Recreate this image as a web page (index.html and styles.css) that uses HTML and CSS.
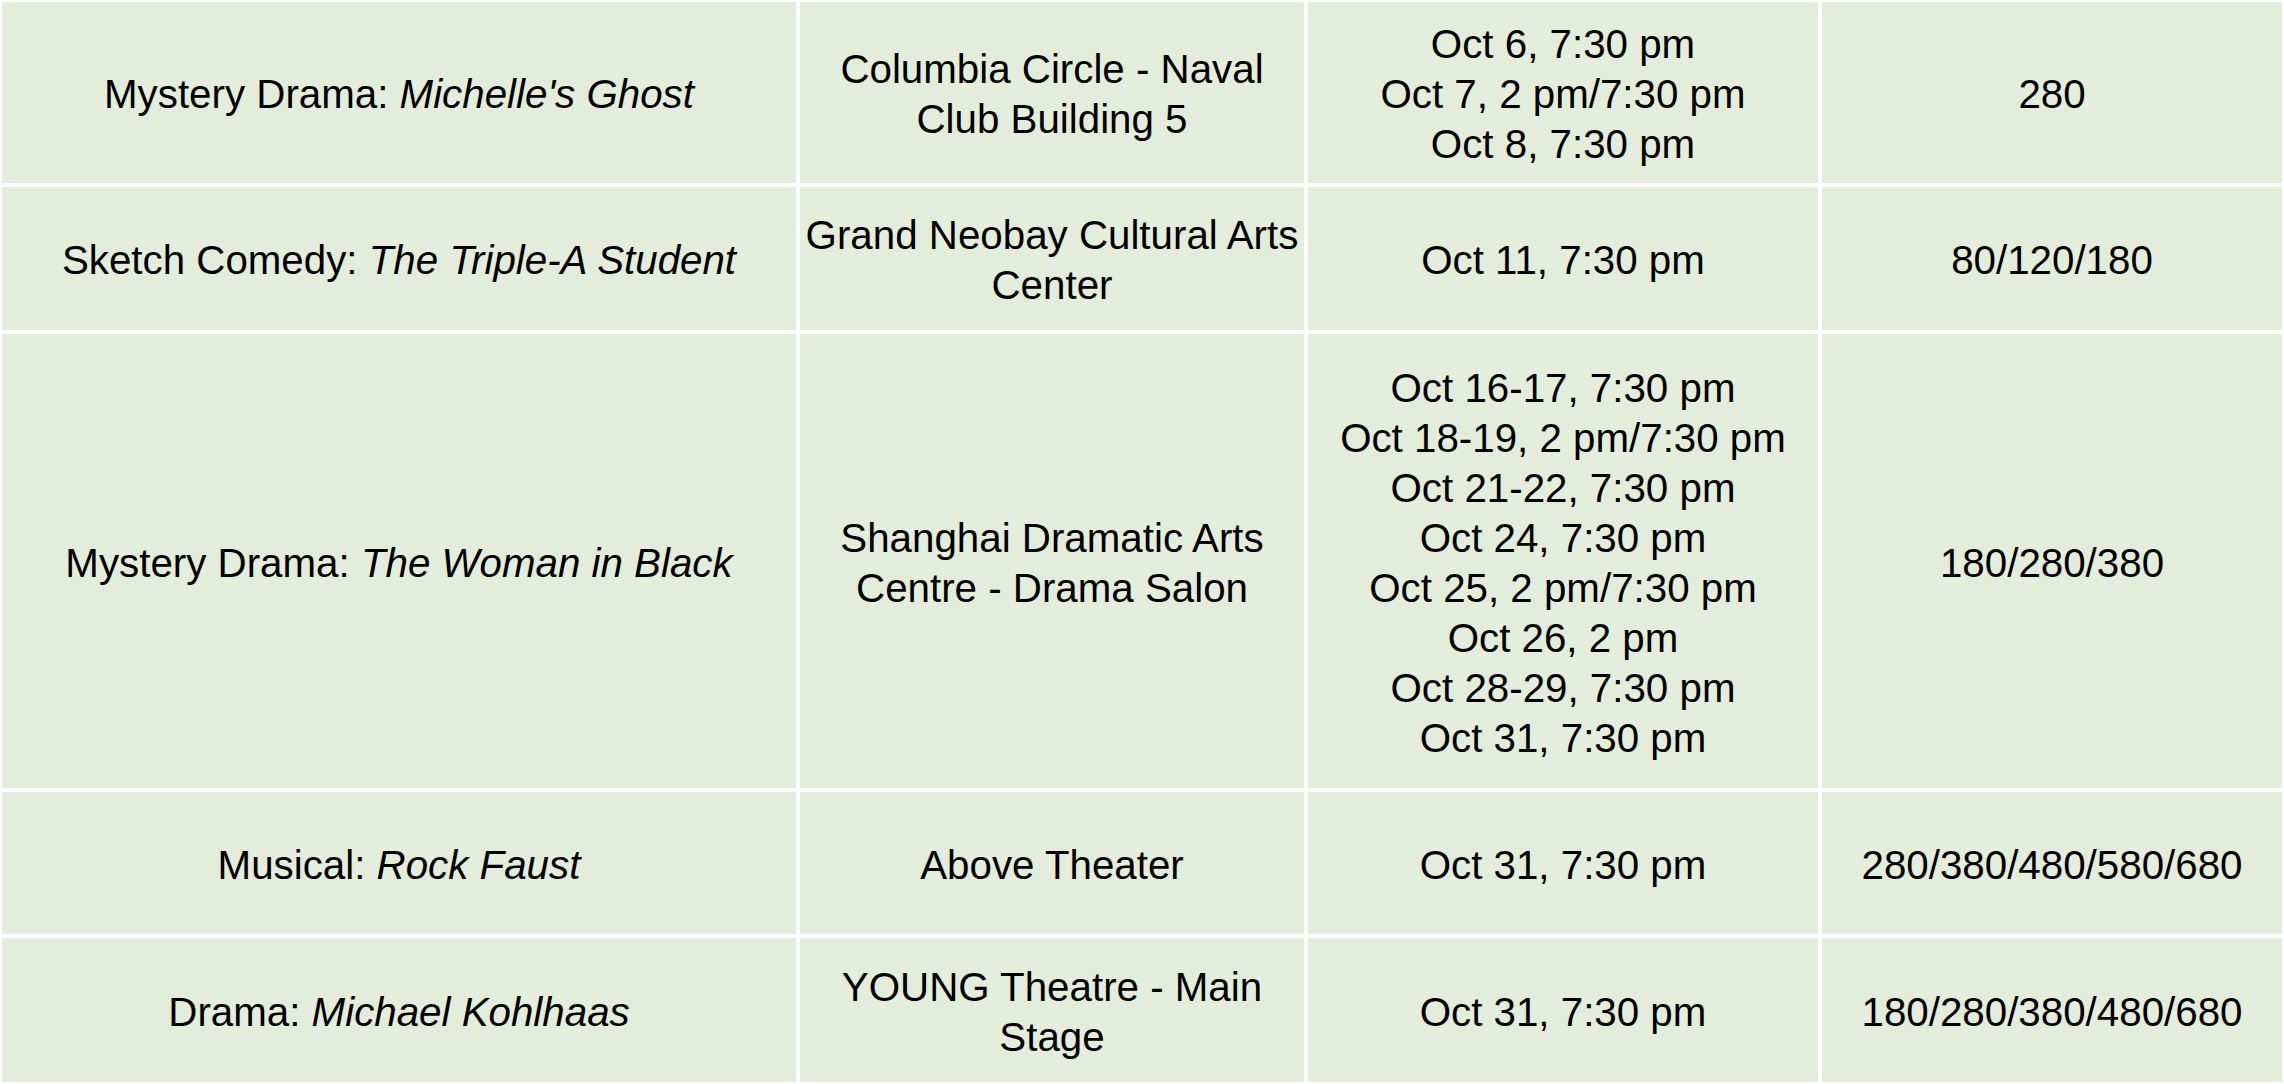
FILE: index.html
```html
<!DOCTYPE html>
<html lang="en">
<head>
<meta charset="utf-8">
<title>Performances</title>
<link rel="stylesheet" href="styles.css">
</head>
<body>
<div class="table">
  <div class="cell">Mystery Drama:&nbsp;<em>Michelle's Ghost</em></div>
  <div class="cell">Columbia Circle - Naval Club Building 5</div>
  <div class="cell">Oct 6, 7:30 pm<br>Oct 7, 2 pm/7:30 pm<br>Oct 8, 7:30 pm</div>
  <div class="cell">280</div>

  <div class="cell">Sketch Comedy:&nbsp;<em>The Triple-A Student</em></div>
  <div class="cell">Grand Neobay Cultural Arts Center</div>
  <div class="cell">Oct 11, 7:30 pm</div>
  <div class="cell">80/120/180</div>

  <div class="cell">Mystery Drama:&nbsp;<em>The Woman in Black</em></div>
  <div class="cell">Shanghai Dramatic Arts Centre - Drama Salon</div>
  <div class="cell">Oct 16-17, 7:30 pm<br>Oct 18-19, 2 pm/7:30 pm<br>Oct 21-22, 7:30 pm<br>Oct 24, 7:30 pm<br>Oct 25, 2 pm/7:30 pm<br>Oct 26, 2 pm<br>Oct 28-29, 7:30 pm<br>Oct 31, 7:30 pm</div>
  <div class="cell">180/280/380</div>

  <div class="cell">Musical:&nbsp;<em>Rock Faust</em></div>
  <div class="cell">Above Theater</div>
  <div class="cell">Oct 31, 7:30 pm</div>
  <div class="cell">280/380/480/580/680</div>

  <div class="cell">Drama:&nbsp;<em>Michael Kohlhaas</em></div>
  <div class="cell">YOUNG Theatre - Main Stage</div>
  <div class="cell">Oct 31, 7:30 pm</div>
  <div class="cell">180/280/380/480/680</div>
</div>
</body>
</html>
```
FILE: styles.css
```css
html, body {
  margin: 0;
  padding: 0;
  background: #ffffff;
}

.table {
  display: grid;
  grid-template-columns: 794px 504px 510px 460px;
  grid-template-rows: 181px 143px 454px 142px 144px;
  gap: 4px;
  padding: 2px;
  width: 2284px;
  box-sizing: border-box;
  background: #ffffff;
  font-family: "Liberation Sans", Arial, sans-serif;
  font-size: 40.3px;
  line-height: 50px;
  color: #000000;
}

.cell {
  background: #e4eddb;
  display: flex;
  align-items: center;
  justify-content: center;
  text-align: center;
  padding: 5px 4px 0;
}

.cell em {
  font-style: italic;
}
```
